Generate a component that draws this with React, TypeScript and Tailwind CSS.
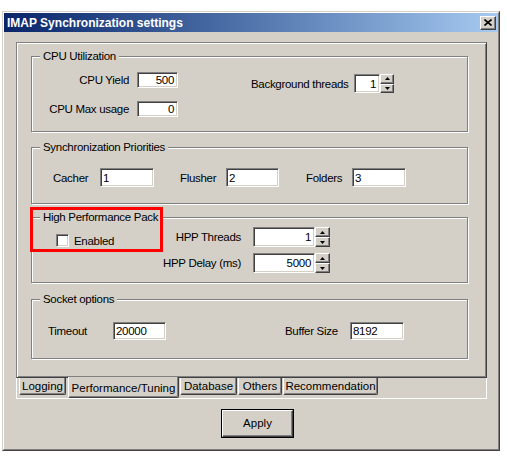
import React from "react";

const txt = "relative top-[1px] font-['Liberation_Sans',sans-serif] text-[11.5px] tracking-[-0.3px] leading-none whitespace-nowrap text-black";
const tabTxt = "font-['Liberation_Sans',sans-serif] text-[11.5px] leading-none whitespace-nowrap text-black";

function Sunken({ className = "", children }: { className?: string; children?: React.ReactNode }) {
  return (
    <div
      className={`flex items-center bg-white border border-t-[#808080] border-l-[#808080] border-b-white border-r-white shadow-[inset_1px_1px_0_#404040,inset_-1px_-1px_0_#d4d0c8] ${className}`}
    >
      {children}
    </div>
  );
}

function Field({ value, className, right }: { value: string; className: string; right?: boolean }) {
  return (
    <Sunken className={`${className} ${right ? "justify-end pr-[3px]" : "pl-[2px]"}`}>
      <span className={txt}>{value}</span>
    </Sunken>
  );
}

function Arrow({ up }: { up?: boolean }) {
  return (
    <svg width="5" height="3" viewBox="0 0 5 3">
      <path d={up ? "M2.5 0 L5 3 L0 3 Z" : "M0 0 L5 0 L2.5 3 Z"} fill="#000" />
    </svg>
  );
}

function SpinBtn({ up }: { up?: boolean }) {
  return (
    <div className="flex flex-1 items-center justify-center bg-[#d4d0c8] border border-t-white border-l-white border-b-[#404040] border-r-[#404040] shadow-[inset_-1px_-1px_0_#808080]">
      <Arrow up={up} />
    </div>
  );
}

function Spin({ value, fieldW, btnW, h }: { value: string; fieldW: string; btnW: string; h: string }) {
  return (
    <div className={`flex ${h}`}>
      <Field value={value} className={`${fieldW} h-full`} right />
      <div className={`flex flex-col ${btnW} h-full`}>
        <SpinBtn up />
        <SpinBtn />
      </div>
    </div>
  );
}

function Group({ title, className, children }: { title: string; className: string; children?: React.ReactNode }) {
  return (
    <div className={`relative w-[437px] border border-[#808080] shadow-[inset_1px_1px_0_#fff,1px_1px_0_#fff] ${className}`}>
      <div className="absolute left-[8px] -top-[7px] flex bg-[#d4d0c8] px-[3px]">
        <span className={txt}>{title}</span>
      </div>
      {children}
    </div>
  );
}

function Tab({ label, className, active }: { label: string; className: string; active?: boolean }) {
  return (
    <div
      className={`flex justify-center rounded-b-[2px] bg-[#d4d0c8] border-l border-l-white border-r border-r-[#404040] border-b border-b-[#404040] shadow-[inset_-1px_-1px_0_#808080] ${
        active ? "relative -mt-[1px] h-[21px] pt-[6px]" : "h-[17px] pt-[3px]"
      } ${className}`}
    >
      <span className={tabTxt}>{label}</span>
    </div>
  );
}

export default function App() {
  return (
    <div className="min-h-[470px] bg-white pl-[2px] pt-[11px]">
      <div className="w-[498px] h-[440px] border border-t-[#d4d0c8] border-l-[#d4d0c8] border-b-[#404040] border-r-[#404040]">
        <div className="flex h-full flex-col bg-[#d4d0c8] border border-t-white border-l-white border-b-[#808080] border-r-[#808080]">
          {/* title bar */}
          <div className="flex h-[19px] items-center justify-between bg-linear-to-r from-[#0a246a] to-[#a6caf0] pl-[3px] pr-[2px]">
            <span className="font-['Liberation_Sans',sans-serif] text-[12px] font-bold leading-none text-white">
              IMAP Synchronization settings
            </span>
            <div className="flex h-[14px] w-[16px] items-center justify-center bg-[#d4d0c8] border border-t-white border-l-white border-b-[#404040] border-r-[#404040] shadow-[inset_-1px_-1px_0_#808080]">
              <svg width="8" height="7" viewBox="0 0 8 7">
                <path d="M0.5 0.5 L7.5 6.5 M7.5 0.5 L0.5 6.5" stroke="#000" strokeWidth="1.6" />
              </svg>
            </div>
          </div>

          <div className="flex-1 pl-[12px] pt-[10px]">
            {/* tab page */}
            <div className="w-[471px]">
              <div className="flex h-[336px] flex-col pl-[14px] pt-[13px] border border-t-[#808080] border-l-[#808080] border-r-[#404040] border-b-[#404040] shadow-[inset_1px_1px_0_#fff,inset_-1px_-1px_0_#808080]">
                <Group title="CPU Utilization" className="h-[76px]">
                  <div className="flex items-start">
                    <div className="mt-[15px] grid grid-cols-[97px_41px] gap-x-[8px] gap-y-[13px]">
                      <span className={`self-center text-right ${txt}`}>CPU Yield</span>
                      <Field value="500" className="h-[16px] w-[41px]" right />
                      <span className={`self-center text-right ${txt}`}>CPU Max usage</span>
                      <Field value="0" className="h-[16px] w-[41px]" right />
                    </div>
                    <div className="ml-[73px] mt-[17px] flex items-center gap-[6px]">
                      <span className={`w-[97px] ${txt}`}>Background threads</span>
                      <Spin value="1" fieldW="w-[26px]" btnW="w-[14px]" h="h-[19px]" />
                    </div>
                  </div>
                </Group>

                <Group title="Synchronization Priorities" className="mt-[15px] h-[57px]">
                  <div className="mt-[20px] flex items-center pl-[21px]">
                    <span className={`w-[47px] ${txt}`}>Cacher</span>
                    <Field value="1" className="h-[19px] w-[54px]" />
                    <span className={`ml-[26px] w-[46px] ${txt}`}>Flusher</span>
                    <Field value="2" className="h-[19px] w-[53px]" />
                    <span className={`ml-[27px] w-[46px] ${txt}`}>Folders</span>
                    <Field value="3" className="h-[19px] w-[54px]" />
                  </div>
                </Group>

                <Group title="High Performance Pack" className="mt-[13px] h-[66px]">
                  <div className="flex items-start">
                    <div className="mt-[16px] flex w-[128px] items-center gap-[5px] pl-[24px]">
                      <Sunken className="h-[13px] w-[13px]" />
                      <span className={txt}>Enabled</span>
                    </div>
                    <div className="mt-[9px] grid grid-cols-[81px_77px] gap-x-[12px] gap-y-[6px]">
                      <span className={`self-center text-right ${txt}`}>HPP Threads</span>
                      <Spin value="1" fieldW="w-[62px]" btnW="w-[15px]" h="h-[20px]" />
                      <span className={`self-center text-right ${txt}`}>HPP Delay (ms)</span>
                      <Spin value="5000" fieldW="w-[62px]" btnW="w-[15px]" h="h-[20px]" />
                    </div>
                  </div>
                  <div className="pointer-events-none absolute -left-[2px] -top-[11px] h-[45px] w-[133px] border-[3px] border-[#f00]" />
                </Group>

                <Group title="Socket options" className="mt-[16px] h-[60px]">
                  <div className="mt-[22px] flex items-center pl-[16px]">
                    <span className={`w-[65px] ${txt}`}>Timeout</span>
                    <Field value="20000" className="h-[18px] w-[53px]" />
                    <span className={`ml-[119px] w-[65px] ${txt}`}>Buffer Size</span>
                    <Field value="8192" className="h-[18px] w-[54px]" />
                  </div>
                </Group>
              </div>

              {/* tab strip */}
              <div className="flex h-[21px] items-start border-l border-r border-b border-white">
                <Tab label="Logging" className="ml-[2px] w-[47px]" />
                <Tab label="Performance/Tuning" className="ml-[2px] w-[111px]" active />
                <Tab label="Database" className="ml-[1px] w-[57px]" />
                <Tab label="Others" className="ml-[1px] w-[44px]" />
                <Tab label="Recommendation" className="ml-[1px] w-[95px]" />
              </div>
            </div>

            <div className="ml-[205px] mt-[10px] h-[29px] w-[73px] border border-black">
              <div className="flex h-full items-center justify-center bg-[#d4d0c8] border border-t-white border-l-white border-b-[#404040] border-r-[#404040] shadow-[inset_-1px_-1px_0_#808080]">
                <span className={tabTxt}>Apply</span>
              </div>
            </div>
          </div>
        </div>
      </div>
    </div>
  );
}
